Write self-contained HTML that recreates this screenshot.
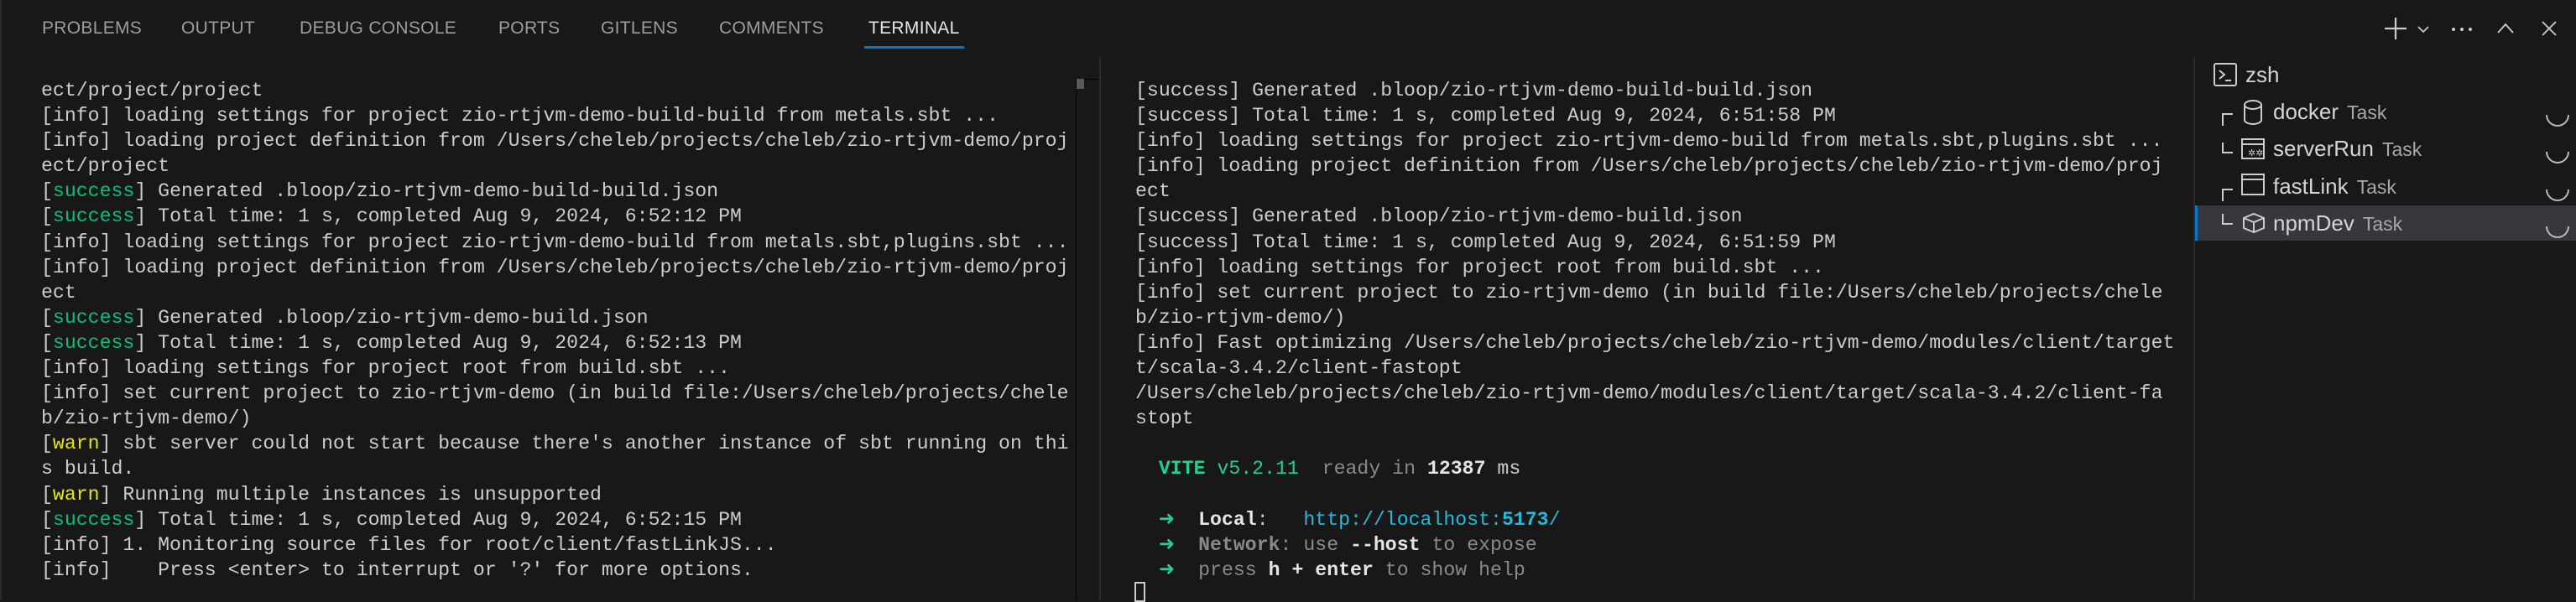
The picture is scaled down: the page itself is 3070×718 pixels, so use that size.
<!DOCTYPE html>
<html><head><meta charset="utf-8"><style>
*{margin:0;padding:0;box-sizing:border-box}
body{width:3070px;height:716px;background:#181818;overflow:hidden;position:relative;font-family:"Liberation Sans",sans-serif;color:#ccc}
.tab{position:absolute;top:22px;font-size:21px;color:#9d9d9d;letter-spacing:0.3px}
.term{position:absolute;top:93px;font-family:"Liberation Mono",monospace;font-size:23.2px;line-height:30.1px;white-space:pre;color:#cccccc}
.g{color:#0dbc79}.y{color:#e5e510}.bg{color:#23d18b;font-weight:bold}.gn{color:#23d18b}.c{color:#29b8db}.b{font-weight:bold;color:#e5e5e5}.d{color:#8a8a8a}.db{color:#8a8a8a;font-weight:bold}
.row{position:absolute;left:2616px;width:454px;height:42px}
.lbl{position:absolute;left:2709px;font-size:26px;color:#d4d4d4}
.lbl span{font-size:23px;color:#a8a8a8;margin-left:10px}
svg{position:absolute;overflow:visible}
</style></head><body>
<div style="position:absolute;left:0;top:0;width:2px;height:716px;background:#2a2a2a"></div>
<div class="tab" style="left:50px">PROBLEMS</div>
<div class="tab" style="left:216px">OUTPUT</div>
<div class="tab" style="left:357px">DEBUG CONSOLE</div>
<div class="tab" style="left:594px">PORTS</div>
<div class="tab" style="left:716px">GITLENS</div>
<div class="tab" style="left:857px">COMMENTS</div>
<div class="tab" style="left:1035px;color:#e7e7e7">TERMINAL</div>
<div style="position:absolute;left:1030px;top:55px;width:119px;height:3px;background:#0078d4"></div>

<svg style="left:0;top:0" width="3070" height="70" stroke="#cccccc" stroke-width="2.2" fill="none">
<path d="M2842 34h26M2855 21v26"/>
<path d="M2882 32l6 6 6-6" stroke-width="1.6"/>
<circle cx="2924" cy="35" r="2" fill="#ccc" stroke="none"/><circle cx="2934" cy="35" r="2" fill="#ccc" stroke="none"/><circle cx="2944" cy="35" r="2" fill="#ccc" stroke="none"/>
<path d="M2977 39l9-10 9 10" stroke-width="1.8"/>
<path d="M3030 26l16 16M3046 26l-16 16" stroke-width="1.8"/>
</svg>

<div style="position:absolute;left:1310px;top:68px;width:2px;height:648px;background:#2b2b2b"></div>
<div style="position:absolute;left:1282px;top:94px;width:1px;height:622px;background:#000"></div>
<div style="position:absolute;left:1282px;top:94px;width:28px;height:1px;background:#000"></div>
<div style="position:absolute;left:1283px;top:94px;width:9px;height:12px;background:#5a5a5a"></div>
<div style="position:absolute;left:2614px;top:68px;width:2px;height:648px;background:#2b2b2b"></div>

<div class="term" style="left:49px">ect/project/project
[info] loading settings for project zio-rtjvm-demo-build-build from metals.sbt ...
[info] loading project definition from /Users/cheleb/projects/cheleb/zio-rtjvm-demo/proj
ect/project
[<span class="g">success</span>] Generated .bloop/zio-rtjvm-demo-build-build.json
[<span class="g">success</span>] Total time: 1 s, completed Aug 9, 2024, 6:52:12 PM
[info] loading settings for project zio-rtjvm-demo-build from metals.sbt,plugins.sbt ...
[info] loading project definition from /Users/cheleb/projects/cheleb/zio-rtjvm-demo/proj
ect
[<span class="g">success</span>] Generated .bloop/zio-rtjvm-demo-build.json
[<span class="g">success</span>] Total time: 1 s, completed Aug 9, 2024, 6:52:13 PM
[info] loading settings for project root from build.sbt ...
[info] set current project to zio-rtjvm-demo (in build file:/Users/cheleb/projects/chele
b/zio-rtjvm-demo/)
[<span class="y">warn</span>] sbt server could not start because there's another instance of sbt running on thi
s build.
[<span class="y">warn</span>] Running multiple instances is unsupported
[<span class="g">success</span>] Total time: 1 s, completed Aug 9, 2024, 6:52:15 PM
[info] 1. Monitoring source files for root/client/fastLinkJS...
[info]    Press &lt;enter&gt; to interrupt or '?' for more options.</div>

<div class="term" style="left:1353px">[success] Generated .bloop/zio-rtjvm-demo-build-build.json
[success] Total time: 1 s, completed Aug 9, 2024, 6:51:58 PM
[info] loading settings for project zio-rtjvm-demo-build from metals.sbt,plugins.sbt ...
[info] loading project definition from /Users/cheleb/projects/cheleb/zio-rtjvm-demo/proj
ect
[success] Generated .bloop/zio-rtjvm-demo-build.json
[success] Total time: 1 s, completed Aug 9, 2024, 6:51:59 PM
[info] loading settings for project root from build.sbt ...
[info] set current project to zio-rtjvm-demo (in build file:/Users/cheleb/projects/chele
b/zio-rtjvm-demo/)
[info] Fast optimizing /Users/cheleb/projects/cheleb/zio-rtjvm-demo/modules/client/target
t/scala-3.4.2/client-fastopt
/Users/cheleb/projects/cheleb/zio-rtjvm-demo/modules/client/target/scala-3.4.2/client-fa
stopt

  <span class="bg">VITE</span> <span class="gn">v5.2.11</span>  <span class="d">ready in</span> <span class="b">12387</span> ms

  <span class="gn">➜</span>  <span class="b">Local</span>:   <span class="c">http://localhost:<b>5173</b>/</span>
  <span class="gn">➜</span>  <span class="db">Network</span><span class="d">: use </span><span class="b">--host</span><span class="d"> to expose</span>
  <span class="gn">➜</span>  <span class="d">press </span><span class="b">h + enter</span><span class="d"> to show help</span></div>
<div style="position:absolute;left:1352px;top:694px;width:13px;height:24px;border:2px solid #ccc"></div>

<div class="row" style="top:245px;background:#37373d"></div>
<div style="position:absolute;left:2616px;top:245px;width:3px;height:42px;background:#0078d4"></div>

<svg style="left:0;top:0" width="3070" height="716" stroke="#cccccc" stroke-width="2" fill="none">
<rect x="2639" y="76" width="26" height="26" rx="2"/>
<path d="M2645 84l6 5-6 5M2652 96h7"/>
<path d="M2649 150v-14h12M2649 170v12h12M2649 240v-14h12M2649 255v12h12"/>
<ellipse cx="2685" cy="125" rx="10" ry="5"/><path d="M2675 125v18a10 5 0 0 0 20 0v-18"/>
<rect x="2672" y="166" width="26" height="23"/><path d="M2672 172h26"/>
<text x="2679" y="186" font-size="11" fill="#ccc" stroke="none">✲✲</text>
<rect x="2672" y="208" width="26" height="24"/><path d="M2672 214h26"/>
<path d="M2674 260l12-5 12 5v12l-12 5-12-5zM2674 260l12 5 12-5M2686 265v12"/>
<path d="M3035 137a13 13 0 0 0 26 0M3035 181a13 13 0 0 0 26 0M3035 226a13 13 0 0 0 26 0M3035 270a13 13 0 0 0 26 0" stroke="#bbb"/>
</svg>
<div class="lbl" style="left:2676px;top:74px">zsh</div>
<div class="lbl" style="top:118px">docker<span>Task</span></div>
<div class="lbl" style="top:162px">serverRun<span>Task</span></div>
<div class="lbl" style="top:207px">fastLink<span>Task</span></div>
<div class="lbl" style="top:251px">npmDev<span>Task</span></div>
</body></html>
